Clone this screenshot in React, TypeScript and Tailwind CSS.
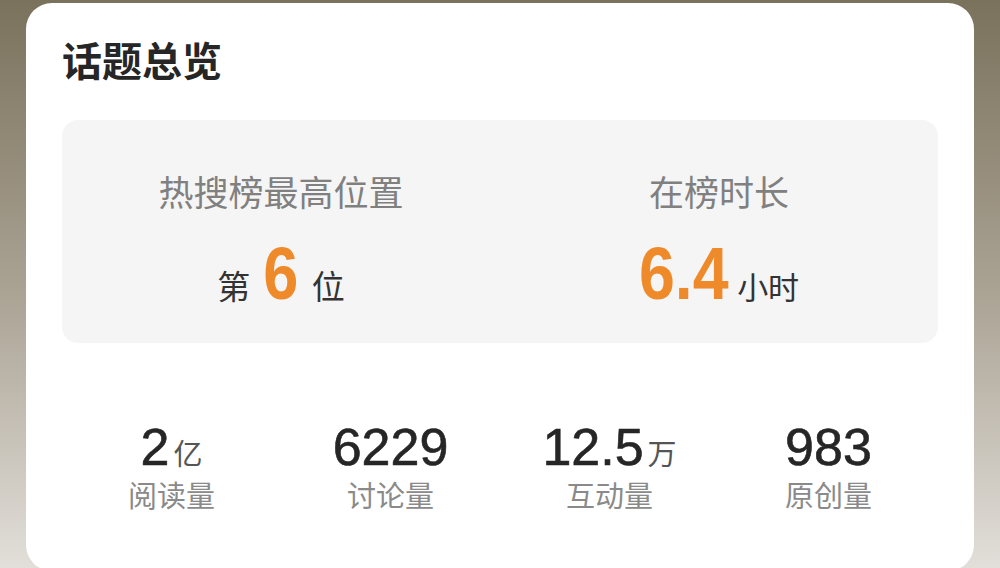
import React from 'react';

const cjk = "font-['Noto_Sans_CJK_SC',sans-serif]";

interface StatProps {
  value: string;
  unit?: string;
  label: string;
}

function Stat({ value, unit, label }: StatProps) {
  return (
    <div className="flex flex-col items-center">
      <div className="flex items-baseline">
        <span className="font-['Liberation_Sans',sans-serif] text-[52px] leading-none text-[#262626] [-webkit-text-stroke:0.6px_#262626]">
          {value}
        </span>
        {unit && (
          <span className={`${cjk} ml-[4px] text-[29px] leading-none text-[#555]`}>{unit}</span>
        )}
      </div>
      <div className={`${cjk} mt-[7px] text-[29px] leading-none text-[#8a8a8a]`}>{label}</div>
    </div>
  );
}

export default function App() {
  // overview numbers
  const stats: StatProps[] = [
    { value: '2', unit: '亿', label: '阅读量' },
    { value: '6229', label: '讨论量' },
    { value: '12.5', unit: '万', label: '互动量' },
    { value: '983', label: '原创量' },
  ];

  return (
    <div className="h-[568px] w-[1000px] overflow-hidden bg-gradient-to-b from-[#7b725d] via-[#a9a192] to-[#e2dfda]">
      <div className="mx-[26px] mt-[3px] h-[568px] rounded-[26px] bg-white px-[36px] pt-[36px]">
        {/* Title */}
        <h1 className={`${cjk} text-[40px] font-bold leading-none text-[#262626]`}>话题总览</h1>

        {/* Hot search box */}
        <div className="mt-[41px] grid h-[223px] grid-cols-2 rounded-[16px] bg-[#f5f5f5]">
          <div className="flex flex-col items-center pt-[53px]">
            <div className={`${cjk} text-[35px] leading-none text-[#808080]`}>热搜榜最高位置</div>
            <div className="mt-[28px] flex items-baseline">
              <span className={`${cjk} text-[33px] leading-none text-[#333]`}>第</span>
              <span className="mx-[10px] inline-block scale-x-[0.84] font-['Liberation_Sans',sans-serif] text-[75px] font-bold leading-none text-[#ef8a2b]">
                6
              </span>
              <span className={`${cjk} text-[33px] leading-none text-[#333]`}>位</span>
            </div>
          </div>
          <div className="flex flex-col items-center pt-[53px]">
            <div className={`${cjk} text-[35px] leading-none text-[#808080]`}>在榜时长</div>
            <div className="mt-[28px] flex items-baseline">
              <span className="-mr-[8px] inline-block origin-left scale-x-[0.86] font-['Liberation_Sans',sans-serif] text-[75px] font-bold leading-none text-[#ef8a2b]">
                6.4
              </span>
              <span className={`${cjk} ml-[2px] text-[31px] leading-none text-[#333]`}>小时</span>
            </div>
          </div>
        </div>

        {/* Stats */}
        <div className="mt-[78px] grid grid-cols-4">
          {stats.map((s) => (
            <Stat key={s.label} {...s} />
          ))}
        </div>
      </div>
    </div>
  );
}
